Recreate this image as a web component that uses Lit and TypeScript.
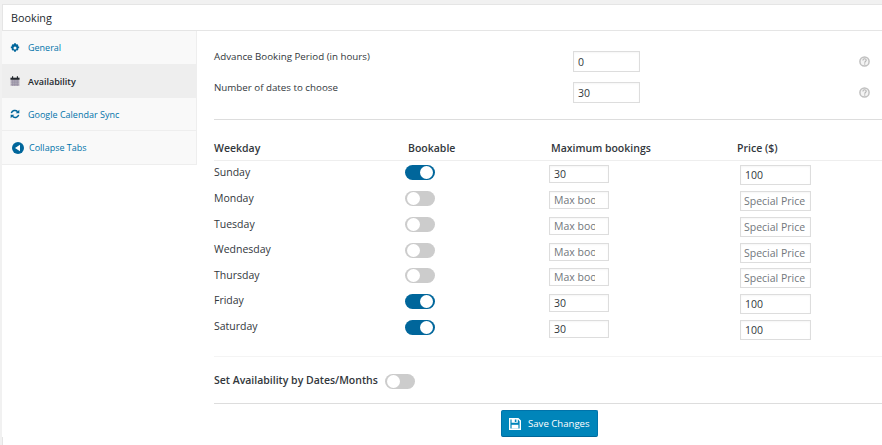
import { LitElement, html, css } from "lit";
import { customElement } from "lit/decorators.js";

const days: [string, boolean][] = [
  ["Sunday", true], ["Monday", false], ["Tuesday", false], ["Wednesday", false],
  ["Thursday", false], ["Friday", true], ["Saturday", true],
];

@customElement("app-root")
export class AppRoot extends LitElement {
  static styles = css`
    :host { display: block; width: 882px; height: 445px; overflow: hidden; background: #f1f1f1; font-family: "Open Sans", sans-serif; font-size: 10.5px; color: #32373c; padding-top: 4px; box-sizing: border-box; }
    * { box-sizing: border-box; }
    .panel { margin-left: 2px; background: #fff; height: 441px; border-left: 1px solid #e5e5e5; }
    .title { height: 27px; border-bottom: 1px solid #e5e5e5; border-top: 1px solid #e5e5e5; padding: 0 0 0 8px; display: flex; align-items: center; font-size: 10.8px; color: #23282d; background: #fff; }
    .body { display: flex; }
    .side { width: 195px; flex: none; background: #fff; margin-left: -1px; }
    .tabs { background: #f9f9f9; border-right: 1px solid #eee; border-bottom: 1px solid #eee; }
    .tab { display: flex; align-items: center; height: 33px; padding-left: 8px; gap: 8px; color: #0073aa; font-size: 9px; border-bottom: 1px solid #eee; }
    .tab svg { width: 10px; height: 10px; flex: none; }
    .tab.active { background: #eee; color: #23282d; font-weight: 600; height: 34px; border-bottom: 0; }
    .tab.plain { border-bottom: 0; height: 33px; }
    .tab.collapse { border: 0; padding-left: 10px; gap: 5px; }
    .tab.collapse svg { width: 12px; height: 12px; }
    .main { margin-left: 17px; width: 668px; flex: none; }
    .field { display: flex; align-items: flex-start; }
    .field .lab { width: 359px; flex: none; line-height: 11px; font-size: 9.75px; }
    .field input { width: 67px; height: 21px; }
    .f1 { margin-top: 20px; height: 31px; }
    .f2 { height: 37px; }
    .help { width: 11px; height: 11px; margin-left: 219px; margin-top: 5px; flex: none; }
    hr { border: 0; height: 1px; background: #ddd; margin: 0; }
    input { display: block; border: 1px solid #ddd; background: #fff; font: inherit; color: #32373c; padding: 0 4px; margin: 0; outline: 0; border-radius: 0; font-size: 10.5px; box-shadow: inset 0 1px 2px rgba(0,0,0,.04); }
    input::placeholder { color: #72777c; opacity: 1; }
    .head { height: 41px; border-bottom: 1px solid #eee; display: grid; grid-template-columns: 194px 143px 186px 1fr; align-items: end; padding-bottom: 5px; font-weight: 600; font-size: 10.5px; color: #32373c; }
    .rows { height: 196px; border-bottom: 1px solid #f4f4f4; padding-top: 4px; }
    .row { height: 26px; display: grid; grid-template-columns: 191px 144px 191px 1fr; align-items: start; }
    .row:nth-child(4) { height: 25px; }
    .row .day { line-height: 14px; }
    .row:nth-child(4) .day, .row:nth-child(n+6) .day { margin-top: -1px; }
    .toggle { display: block; width: 30px; height: 15px; border-radius: 8px; background: #ccc; position: relative; flex: none; }
    .toggle::after { content: ""; position: absolute; top: 1px; left: 2px; width: 13px; height: 13px; border-radius: 50%; background: #fff; }
    .toggle.on { background: #00669b; }
    .toggle.on::after { left: 15px; }
    .max { width: 60px; height: 18px; }
    .max.empty { padding-right: 13px; }
    .price { width: 71px; height: 20px; }
    .price.empty { padding: 0 3px; }
    .avail { height: 47px; display: flex; align-items: center; gap: 7px; font-weight: 600; color: #32373c; border-bottom: 1px solid #ddd; font-size: 10.5px; padding-bottom: 1px; }
    .avail .toggle { margin-top: 3px; }
    .foot { display: flex; padding-left: 287px; padding-top: 6px; }
    .btn { display: flex; align-items: center; gap: 7px; width: 97px; height: 27px; background: #0085ba; border: 1px solid #0073aa; border-bottom-color: #006799; border-radius: 2px; color: #fff; padding-left: 7px; font-size: 9.6px; font-weight: 500; }
    .btn svg { width: 12px; height: 12px; flex: none; }
  `;

  private help() {
    return html`<svg class="help" viewBox="0 0 11 11"><circle cx="5.5" cy="5.5" r="4.6" fill="#f4f4f4" stroke="#c0c0c0" stroke-width="1.5"/><path d="M3.9 4.4c0-2.1 3.3-2.1 3.3-.1 0 1.2-1.5 1.2-1.5 2.5" fill="none" stroke="#b4b4b4" stroke-width="1.1"/><rect x="5.1" y="7.4" width="1.2" height="1.2" fill="#b4b4b4"/></svg>`;
  }

  render() {
    return html`
      <div class="panel">
        <div class="title">Booking</div>
        <div class="body">
          <div class="side">
            <div class="tabs">
              <div class="tab plain">
                <svg viewBox="0 0 12 12"><path fill="#00669b" fill-rule="evenodd" d="M5 .3h2l.3 1.5 1.2-.6 1.6 1.5-.7 1.2 1.6.3v2.2l-1.6.3.7 1.2-1.6 1.5-1.2-.6-.3 1.6H5l-.3-1.6-1.2.6-1.6-1.5.7-1.2-1.6-.3V4.2l1.6-.3-.7-1.2 1.6-1.5 1.2.6zM6 4.2a1.8 1.8 0 1 0 0 3.6 1.8 1.8 0 0 0 0-3.6z"/></svg>
                General
              </div>
              <div class="tab active">
                <svg viewBox="0 0 12 12"><path fill="#c4bfc8" d="M.6 2h10.8v10H.6z"/><path stroke="#8f8a9e" stroke-width=".8" d="M1 6h10M1 8.2h10M1 10.4h10M3.2 4v8M5.2 4v8M7.2 4v8M9.2 4v8"/><path fill="#23282d" d="M.6 2h10.8v2.4H.6zM2.4 .2h1.4v2.4H2.4zM8.2 .2h1.4v2.4H8.2z"/></svg>
                Availability
              </div>
              <div class="tab">
                <svg viewBox="0 0 12 12"><path fill="none" stroke="#00669b" stroke-width="1.8" d="M1.6 5a4.4 4.4 0 0 1 7.5-1.8M10.4 7a4.4 4.4 0 0 1-7.5 1.8"/><path fill="#00669b" d="M11.2.8v4.4H6.8zM.8 11.2V6.8h4.4z"/></svg>
                Google Calendar Sync
              </div>
              <div class="tab collapse">
                <svg viewBox="0 0 12 12"><circle cx="6" cy="6" r="6" fill="#00669b"/><path fill="#fff" d="M3 6l5-3.3v6.6z"/></svg>
                Collapse Tabs
              </div>
            </div>
          </div>
          <div class="main">
            <div class="field f1"><div class="lab">Advance Booking Period (in hours)</div><input .value=${"0"} />${this.help()}</div>
            <div class="field f2"><div class="lab">Number of dates to choose</div><input .value=${"30"} />${this.help()}</div>
            <hr />
            <div class="head"><div>Weekday</div><div>Bookable</div><div>Maximum bookings</div><div>Price ($)</div></div>
            <div class="rows">
              ${days.map(([d, on]) => html`
                <div class="row">
                  <div class="day">${d}</div>
                  <div><span class="toggle ${on ? "on" : ""}"></span></div>
                  <div>${on ? html`<input class="max" .value=${"30"} />` : html`<input class="max empty" placeholder="Max bookings" />`}</div>
                  <div>${on ? html`<input class="price" .value=${"100"} />` : html`<input class="price empty" placeholder="Special Price" />`}</div>
                </div>`)}
            </div>
            <div class="avail">Set Availability by Dates/Months <span class="toggle"></span></div>
            <div class="foot">
              <div class="btn">
                <svg viewBox="0 0 12 12"><path fill="#fff" fill-rule="evenodd" d="M0 0h9.4L12 2.6V12H0zM1.4 1.4v9.2h9.2V3.2L9 1.4h-.2v3.4H2.6V1.4zM5.8 1.6v2.4h1.6V1.6z"/><path fill="#fff" d="M2.6 6.8h6.8v3.8H2.6z"/></svg>
                Save Changes
              </div>
            </div>
          </div>
        </div>
      </div>
    `;
  }
}
